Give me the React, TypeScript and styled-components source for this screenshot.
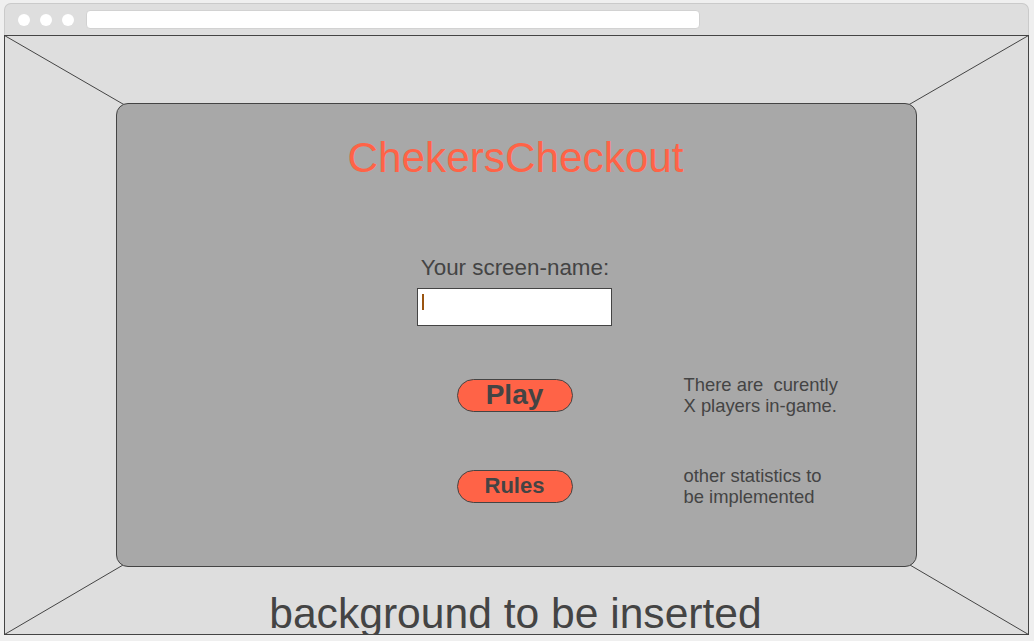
import React from "react";
import styled, { createGlobalStyle } from "styled-components";

const GlobalStyle = createGlobalStyle`
  html, body {
    margin: 0;
    padding: 0;
    background: #efefef;
    font-family: "Liberation Sans", Arial, sans-serif;
  }
  * { box-sizing: border-box; }
`;

const Window = styled.div`
  margin: 3px 0 0 4px;
  width: 1025px;
  display: flex;
  flex-direction: column;
`;

const TopBar = styled.div`
  height: 32px;
  display: flex;
  align-items: center;
  padding: 0 0 0 13px;
  gap: 10px;
  background: #dedede;
  border: 1px solid #cacaca;
  border-bottom: none;
  border-radius: 7px 7px 0 0;
`;

const Dot = styled.span`
  width: 12px;
  height: 12px;
  border-radius: 50%;
  background: #ffffff;
  flex: none;
`;

const AddressBar = styled.div`
  margin-left: 2px;
  width: 614px;
  height: 19px;
  background: #ffffff;
  border: 1px solid #d2d2d2;
  border-radius: 4px;
`;

const Content = styled.div`
  position: relative;
  height: 600px;
  background: #dedede;
  border: 1px solid #444;
  display: flex;
  flex-direction: column;
  align-items: center;
  padding-top: 67px;
  overflow: hidden;
`;

const Perspective = styled.svg`
  position: absolute;
  inset: 0;
  width: 100%;
  height: 100%;
  overflow: visible;
`;

const Panel = styled.section`
  position: relative;
  z-index: 1;
  width: 801px;
  height: 464px;
  flex: none;
  background: #a8a8a8;
  border: 1px solid #444;
  border-radius: 12px;
  display: flex;
  flex-direction: column;
  align-items: center;
  padding-top: 30px;
`;

const Title = styled.h1`
  margin: 0 0 0 -2px;
  font-weight: 400;
  font-size: 42.3px;
  line-height: normal;
  color: #ff6347;
`;

const Label = styled.label`
  margin-top: 73px;
  margin-left: -3px;
  font-size: 22.4px;
  line-height: normal;
  color: #444;
`;

const FieldWrap = styled.div`
  position: relative;
  margin-top: 7px;
  margin-left: -5px;
`;

const NameInput = styled.input`
  display: block;
  width: 195px;
  height: 38px;
  background: #ffffff;
  border: 1px solid #444;
  border-radius: 0;
  outline: none;
  padding: 0 6px;
  font-family: inherit;
  font-size: 16px;
  caret-color: transparent;
`;

const Caret = styled.span`
  position: absolute;
  left: 5px;
  top: 6px;
  width: 2px;
  height: 16px;
  background: #9a5410;
`;

const ActionRow = styled.div<{ $top: number }>`
  margin-top: ${(p) => p.$top}px;
  width: 100%;
  display: grid;
  grid-template-columns: 1fr 116px 1fr;
  align-items: center;
  height: 42px;
  padding-right: 4px;
`;

const PillButton = styled.button<{ $size: number }>`
  grid-column: 2;
  width: 116px;
  height: 33px;
  padding: 0;
  background: #ff6347;
  border: 1px solid #444;
  border-radius: 17px;
  color: #444;
  font-family: inherit;
  font-weight: 700;
  font-size: ${(p) => p.$size}px;
  line-height: 1;
  display: flex;
  align-items: center;
  justify-content: center;
  cursor: pointer;
`;

const Stats = styled.p`
  grid-column: 3;
  margin: 0;
  padding-left: 111px;
  font-size: 18.4px;
  line-height: 21px;
  color: #444;
  white-space: pre;
`;

const Footer = styled.div`
  margin-top: 27px;
  margin-left: -2px;
  font-size: 42.6px;
  line-height: 38px;
  color: #444;
  flex: none;
`;

export default function App() {
  return (
    <>
      <GlobalStyle />
      <Window>
        <TopBar>
          <Dot />
          <Dot />
          <Dot />
          <AddressBar />
        </TopBar>
        <Content>
          <Perspective aria-hidden="true">
            <g stroke="#444" strokeWidth="1" fill="none">
              <line x1="-0.5" y1="-0.5" x2="130" y2="75" />
              <line x1="1023.5" y1="-0.5" x2="893" y2="75" />
              <line x1="-0.5" y1="598.5" x2="130" y2="522" />
              <line x1="1023.5" y1="598.5" x2="893" y2="522" />
            </g>
          </Perspective>
          <Panel>
            <Title>ChekersCheckout</Title>
            <Label htmlFor="screen-name">Your screen-name:</Label>
            <FieldWrap>
              <NameInput id="screen-name" type="text" readOnly />
              <Caret />
            </FieldWrap>
            <ActionRow $top={48}>
              <PillButton $size={28}>Play</PillButton>
              <Stats>{"There are  curently\nX players in-game."}</Stats>
            </ActionRow>
            <ActionRow $top={49}>
              <PillButton $size={22}>Rules</PillButton>
              <Stats>{"other statistics to\nbe implemented"}</Stats>
            </ActionRow>
          </Panel>
          <Footer>background to be inserted</Footer>
        </Content>
      </Window>
    </>
  );
}
